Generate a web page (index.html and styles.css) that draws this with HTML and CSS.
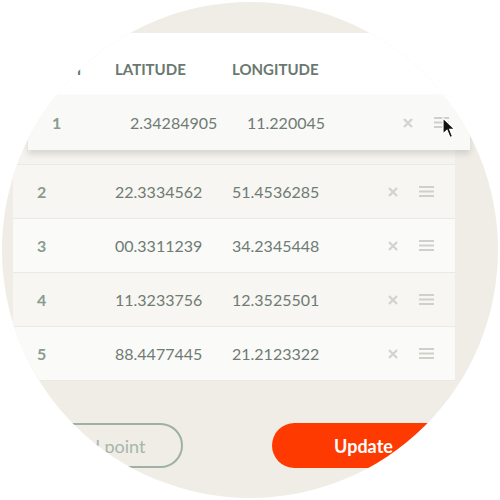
FILE: index.html
```html
<!DOCTYPE html>
<html>
<head>
<meta charset="utf-8">
<link rel="stylesheet" href="styles.css">
</head>
<body>
<div class="circle">
  <div class="card">
    <div class="grid head">
      <span>POINT</span>
      <span>LATITUDE</span>
      <span>LONGITUDE</span>
    </div>
    <div class="row slot"></div>
    <div class="grid row">
      <span class="num">2</span><span>22.3334562</span><span>51.4536285</span>
      <svg class="x" width="10" height="10" viewBox="0 0 10 10"><path d="M1 1L9 9M9 1L1 9"/></svg>
      <svg class="menu" width="15" height="11" viewBox="0 0 15 11"><path d="M0 1H15M0 5.5H15M0 10H15"/></svg>
    </div>
    <div class="grid row alt">
      <span class="num">3</span><span>00.3311239</span><span>34.2345448</span>
      <svg class="x" width="10" height="10" viewBox="0 0 10 10"><path d="M1 1L9 9M9 1L1 9"/></svg>
      <svg class="menu" width="15" height="11" viewBox="0 0 15 11"><path d="M0 1H15M0 5.5H15M0 10H15"/></svg>
    </div>
    <div class="grid row">
      <span class="num">4</span><span>11.3233756</span><span>12.3525501</span>
      <svg class="x" width="10" height="10" viewBox="0 0 10 10"><path d="M1 1L9 9M9 1L1 9"/></svg>
      <svg class="menu" width="15" height="11" viewBox="0 0 15 11"><path d="M0 1H15M0 5.5H15M0 10H15"/></svg>
    </div>
    <div class="grid row alt">
      <span class="num">5</span><span>88.4477445</span><span>21.2123322</span>
      <svg class="x" width="10" height="10" viewBox="0 0 10 10"><path d="M1 1L9 9M9 1L1 9"/></svg>
      <svg class="menu" width="15" height="11" viewBox="0 0 15 11"><path d="M0 1H15M0 5.5H15M0 10H15"/></svg>
    </div>
  </div>

  <div class="grid row dragged">
    <span class="num">1</span><span>2.34284905</span><span>11.220045</span>
    <svg class="x" width="10" height="10" viewBox="0 0 10 10"><path d="M1 1L9 9M9 1L1 9"/></svg>
    <svg class="menu" width="15" height="11" viewBox="0 0 15 11"><path d="M0 1H15M0 5.5H15M0 10H15"/></svg>
    <svg class="cursor" width="14" height="22" viewBox="0 0 14 22"><path d="M1 1V17L5 13.3L8 20.5L10.6 19.4L7.7 12.4H12.8Z"/></svg>
  </div>

  <div class="actions">
    <button class="btn add">Add point</button>
    <button class="btn update">Update</button>
  </div>
</div>
</body>
</html>
```
FILE: styles.css
```css
html, body {
  margin: 0;
  padding: 0;
  background: #ffffff;
}

body {
  font-family: Lato, "Open Sans", sans-serif;
}

.circle {
  position: relative;
  width: 496px;
  height: 496px;
  margin: 2px;
  border-radius: 50%;
  overflow: hidden;
  background: #efede6;
  padding-top: 31px;
  box-sizing: border-box;
}

.card {
  margin-left: 11px;
  width: 442px;
}

.grid {
  display: grid;
  grid-template-columns: 78px 117px 1fr 31px 15px;
  align-items: center;
  padding: 0 21px 0 24px;
  box-sizing: border-box;
}

.head {
  background: #ffffff;
  height: 78px;
  padding-bottom: 6px;
  font-size: 15px;
  font-weight: 700;
  color: #6a786f;
}

.row {
  height: 54px;
  border-bottom: 1px solid #ebe9e2;
  background: #f7f6f2;
  font-size: 16px;
  color: #6f7b73;
  box-sizing: border-box;
}

.row.alt {
  background: #fafaf8;
}

.row.slot {
  background: #f4f3ef;
}

.num {
  color: #8a9b90;
  font-weight: 700;
}

.x path {
  stroke: #d3d3cf;
  stroke-width: 2.4;
  fill: none;
}

.menu path {
  stroke: #d0d0cb;
  stroke-width: 1.8;
  fill: none;
}

.dragged {
  position: absolute;
  left: 26px;
  top: 93px;
  width: 442px;
  height: 55px;
  border-bottom: none;
  background: #f9f9f8;
  box-shadow: 0 4px 6px rgba(90, 85, 70, 0.18);
}

.cursor {
  position: absolute;
  left: 414px;
  top: 22px;
}

.cursor path {
  fill: #111111;
  stroke: #ffffff;
  stroke-width: 1.2;
}

.actions {
  display: flex;
  justify-content: space-between;
  margin: 42px 0 0 11px;
  width: 442px;
  padding-left: 17px;
  box-sizing: border-box;
}

.btn {
  height: 45px;
  border-radius: 23px;
  font-family: Lato, "Open Sans", sans-serif;
  font-size: 18px;
  box-sizing: border-box;
}

.add {
  width: 153px;
  border: 2px solid #9fb0a5;
  background: transparent;
  color: #a6b5ab;
}

.update {
  width: 183px;
  border: none;
  background: #ff3a00;
  color: #ffffff;
  font-weight: 700;
}
```
